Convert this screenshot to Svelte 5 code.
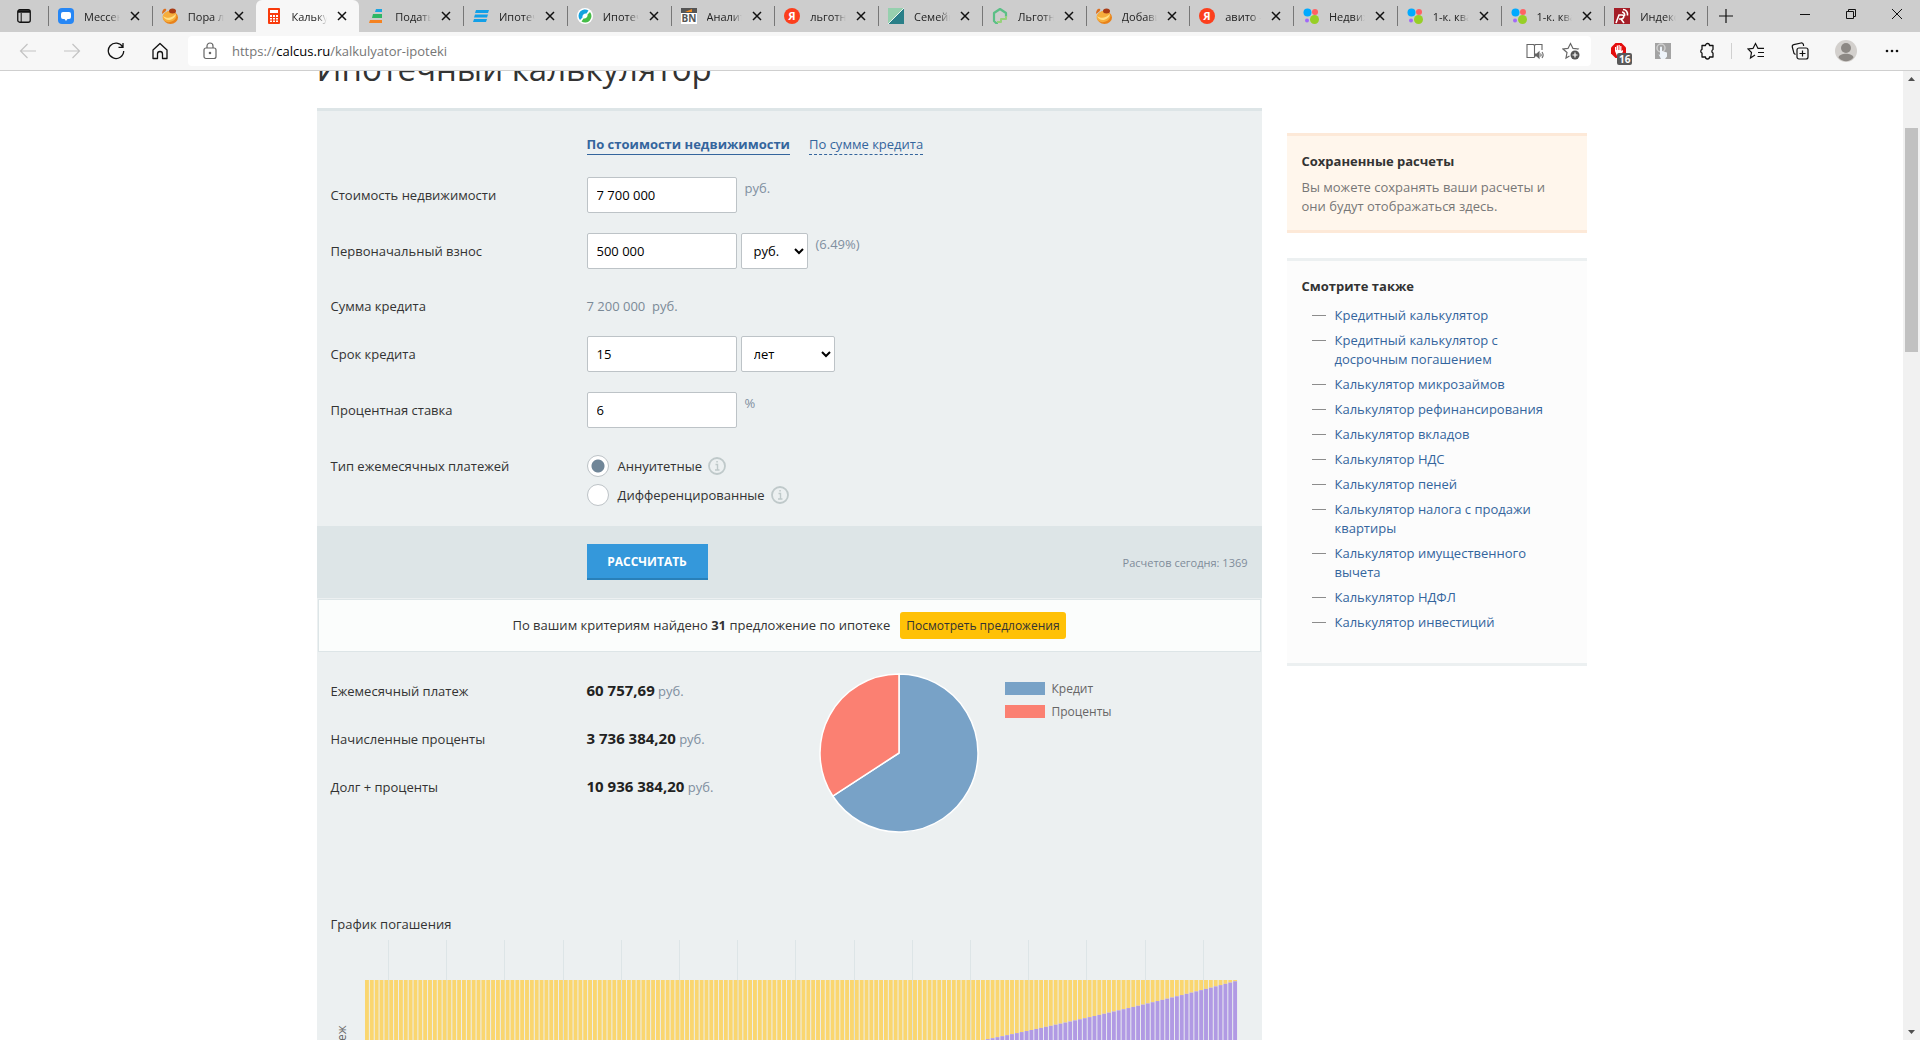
<script lang="ts">
  type Tab = { title: string; icon: string; active?: boolean };

  const tabs: Tab[] = [
    { title: 'Мессенджер', icon: 'chat' },
    { title: 'Пора ли брать', icon: 'ball' },
    { title: 'Калькулятор', icon: 'calc', active: true },
    { title: 'Подать заявку', icon: 'stack' },
    { title: 'Ипотечный', icon: 'stripes' },
    { title: 'Ипотечный', icon: 'ring' },
    { title: 'Аналитика', icon: 'bn' },
    { title: 'льготная ипотека', icon: 'yandex' },
    { title: 'Семейная', icon: 'split' },
    { title: 'Льготная', icon: 'house' },
    { title: 'Добавить', icon: 'ball' },
    { title: 'авито - поиск', icon: 'yandex' },
    { title: 'Недвижимость', icon: 'avito' },
    { title: '1-к. квартира', icon: 'avito' },
    { title: '1-к. квартира', icon: 'avito' },
    { title: 'Индексы', icon: 'index' }
  ];

  const links = [
    'Кредитный калькулятор',
    'Кредитный калькулятор с досрочным погашением',
    'Калькулятор микрозаймов',
    'Калькулятор рефинансирования',
    'Калькулятор вкладов',
    'Калькулятор НДС',
    'Калькулятор пеней',
    'Калькулятор налога с продажи квартиры',
    'Калькулятор имущественного вычета',
    'Калькулятор НДФЛ',
    'Калькулятор инвестиций'
  ];

  const results = [
    { label: 'Ежемесячный платеж', value: '60 757,69' },
    { label: 'Начисленные проценты', value: '3 736 384,20' },
    { label: 'Долг + проценты', value: '10 936 384,20' }
  ];

  let cost = '7 700 000';
  let firstPayment = '500 000';
  let term = '15';
  let rate = '6';
  let paymentType = 'annuity';

  // share of the principal in every monthly payment
  const months = 180;
  const monthRate = 0.06 / 12;
  const step = 4.85;
  const barsLeft = 48;
  const barsTop = 40;
  const barsHeight = 259;
  const bars = Array.from({ length: months }, (_, i) => {
    const share = Math.pow(1 + monthRate, -(months - i));
    return { x: barsLeft + i * step, principal: barsHeight * share };
  });
  const gridLines = Array.from({ length: 15 }, (_, i) => Math.round(71 + i * 12 * step) + 0.5);

  // pie: principal goes clockwise from the top
  const angle = (7200000 / 10936384.2) * 2 * Math.PI;
  const pieX = 80 + 79 * Math.sin(angle);
  const pieY = 80 - 79 * Math.cos(angle);
</script>

<svelte:head>
  <title>Ипотечный калькулятор</title>
</svelte:head>

<div class="browser">
  <header class="tabstrip">
    <button class="tab-menu" aria-label="Меню вкладок">
      <svg width="14" height="14" viewBox="0 0 14 14" fill="none" stroke="#111">
        <rect x=".75" y=".75" width="12.5" height="12.5" rx="2" stroke-width="1.3" />
        <path d="M1 2.5h12" stroke-width="2.5" />
        <path d="M4.200 4v9" />
      </svg>
    </button>

    <nav class="tabs" aria-label="Вкладки">
      {#each tabs as tab}
        <div class="tab" class:active={tab.active}>
          <svg class="favicon" width="16" height="16" viewBox="0 0 16 16">
            {#if tab.icon === 'chat'}
              <rect width="16" height="16" rx="4" fill="#2787f5" />
              <path d="M5 4h6a2 2 0 0 1 2 2v3a2 2 0 0 1-2 2H9.500L8 13l-1.500-2H5a2 2 0 0 1-2-2V6a2 2 0 0 1 2-2z" fill="#fff" />
            {:else if tab.icon === 'ball'}
              <ellipse cx="8.500" cy="9.500" rx="7.500" ry="6.500" fill="#e8821a" />
              <ellipse cx="7.500" cy="8.500" rx="7" ry="5.500" fill="#f6ad3c" transform="rotate(-15 7.500 8.500)" />
              <path d="M1 8c4 3 9 2 13-2-1 6-10 9-13 2z" fill="#ffdf85" />
              <ellipse cx="10.500" cy="3" rx="3.500" ry="2.500" fill="#a93b14" />
              <path d="M0 6c0-4 2-6 4-5 1 1-1 3-4 5z" fill="#dd6f1d" />
            {:else if tab.icon === 'calc'}
              <rect x="2" width="12" height="16" rx="1" fill="#f93b0c" />
              <path d="M4 2h8v3H4zM4 7h2v2H4zM7 7h2v2H7zM10 7h2v2h-2zM4 10h2v1.500H4zM7 10h2v1.500H7zM10 10h2v1.500h-2zM4 12.500h2V14H4zM7 12.500h2V14H7zM10 12.500h2V14h-2z" fill="#fff" />
            {:else if tab.icon === 'stack'}
              <path d="M7 1h6v3H6z" fill="#1ca4e0" />
              <path d="M4 6h9v4H3z" fill="#2fb765" />
              <path d="M1 12h12v3H0z" fill="#f58220" />
            {:else if tab.icon === 'stripes'}
              <path d="M3 2h13l-1 3H2zM2 6.500h13l-1 3H1zM1 11h13l-1 3H0z" fill="#12a0e8" />
            {:else if tab.icon === 'ring'}
              <circle cx="8" cy="8" r="8" fill="#fff" />
              <path d="M3 12A6.400 6.400 0 0 1 11.500 2.600L9.500 5.500C7 5 5 7 5.500 9.500z" fill="#13a3df" />
              <path d="M13 4A6.400 6.400 0 0 1 4.500 13.400L6.500 10.500C9 11 11 9 10.500 6.500z" fill="#46bd48" />
            {:else if tab.icon === 'bn'}
              <rect width="16" height="5" fill="#555" />
              <path d="M4 4l7-3v3z" fill="#f28a1c" />
              <rect y="5" width="16" height="11" fill="#fff" />
              <text x="8" y="14" font-size="10" font-weight="700" text-anchor="middle" fill="#555">BN</text>
            {:else if tab.icon === 'yandex'}
              <circle cx="8" cy="8" r="8" fill="#fc3f1d" />
              <text x="8" y="12" font-size="11" font-weight="700" text-anchor="middle" fill="#fff">Я</text>
            {:else if tab.icon === 'split'}
              <rect width="16" height="16" fill="#2a7f88" />
              <path d="M0 0h16L0 16z" fill="#96d0ae" />
              <path d="M16 0L0 16" stroke="#e8f3ee" />
            {:else if tab.icon === 'house'}
              <path d="M6 15H4l-2-2V5l6-4 6 4v4" fill="none" stroke="#5abf86" stroke-width="2.200" stroke-linejoin="round" />
              <path d="M14 8v3H9v3H5" fill="none" stroke="#96d27a" stroke-width="2" stroke-linejoin="round" />
            {:else if tab.icon === 'avito'}
              <circle cx="4.500" cy="4.500" r="4" fill="#0af" />
              <circle cx="12" cy="4" r="3" fill="#ff6163" />
              <circle cx="4" cy="12.500" r="2" fill="#a169f7" />
              <circle cx="11.500" cy="11.500" r="4.500" fill="#97cf26" />
            {:else}
              <rect width="16" height="16" fill="#a51e28" />
              <path d="M2 15l3-8h3c3 0 2 4-1 4H5M7 11l3 4M8 4c2 0 3 2 2.500 4M9 1.500c3 0 5 2.500 4.500 6" fill="none" stroke="#fff" stroke-width="1.600" />
            {/if}
          </svg>
          <span class="tab-title">{tab.title}</span>
          <button class="tab-close" aria-label="Закрыть вкладку">
            <svg width="10" height="10" viewBox="0 0 10 10"><path d="M1 1l8 8M9 1l-8 8" stroke="#111" stroke-width="1.500" /></svg>
          </button>
        </div>
      {/each}
    </nav>

    <button class="new-tab" aria-label="Новая вкладка">
      <svg width="14" height="14" viewBox="0 0 14 14"><path d="M7 0v14M0 7h14" stroke="#111" stroke-width="1.200" /></svg>
    </button>

    <div class="window-controls">
      <button aria-label="Свернуть">
        <svg width="10" height="10" viewBox="0 0 10 10"><path d="M0 5.500h10" stroke="#111" /></svg>
      </button>
      <button aria-label="Восстановить">
        <svg width="10" height="10" viewBox="0 0 10 10" fill="none" stroke="#111"><path d="M.5 2.500h7v7h-7zM2.500 2V.5h7v7H8" /></svg>
      </button>
      <button aria-label="Закрыть">
        <svg width="10" height="10" viewBox="0 0 10 10"><path d="M0 0l10 10M10 0L0 10" stroke="#111" /></svg>
      </button>
    </div>
  </header>

  <div class="toolbar">
    <button aria-label="Назад" disabled>
      <svg width="18" height="18" viewBox="0 0 18 18" fill="none" stroke="#c3c3c3" stroke-width="1.200"><path d="M17 9H1.500M8.500 2L1.500 9l7 7" /></svg>
    </button>
    <button aria-label="Вперед" disabled>
      <svg width="18" height="18" viewBox="0 0 18 18" fill="none" stroke="#c3c3c3" stroke-width="1.200"><path d="M1 9h15.500M9.500 2l7 7-7 7" /></svg>
    </button>
    <button aria-label="Обновить">
      <svg width="18" height="18" viewBox="0 0 18 18" fill="none" stroke="#111" stroke-width="1.300"><path d="M15.700 5A7.700 7.700 0 1 0 16.700 9M16 1v4.300h-4.500" /></svg>
    </button>
    <button aria-label="Домой">
      <svg width="18" height="18" viewBox="0 0 18 18" fill="none" stroke="#111" stroke-width="1.300" stroke-linejoin="round"><path d="M2 8l7-6.500L16 8v8.500h-4.500V12a2.500 2.500 0 0 0-5 0v4.500H2z" /></svg>
    </button>

    <div class="address">
      <svg width="16" height="18" viewBox="0 0 16 18" fill="none" stroke="#666" stroke-width="1.200">
        <rect x="2" y="6" width="12" height="10.500" rx="2" />
        <path d="M5 6V4a3 3 0 0 1 6 0v2" />
        <circle cx="8" cy="11" r=".7" fill="#666" />
      </svg>
      <a class="url" href="https://calcus.ru/kalkulyator-ipoteki">https://<b>calcus.ru</b>/kalkulyator-ipoteki</a>
      <button aria-label="Иммерсивное чтение">
        <svg width="18" height="18" viewBox="0 0 18 18" fill="none" stroke="#666" stroke-width="1.100">
          <path d="M8.500 15.500H1v-13h6.500l1 1 1-1H16V8M8.500 3.500v12" />
          <path d="M9.500 12h1.500l2-2v6l-2-2H9.500z" fill="#666" />
          <path d="M14.500 11.500c.8 1 .8 2 0 3M16 10c1.500 2 1.500 4 0 6" />
        </svg>
      </button>
      <button aria-label="Добавить в избранное">
        <svg width="18" height="18" viewBox="0 0 18 18" fill="none" stroke="#666" stroke-width="1.200">
          <path d="M7.500 14L4 16l1-5.500L1 7l5-.6L8.500 1.500 11 6.400l5 .6-.5.500" />
          <circle cx="13" cy="13" r="4.500" fill="#555" stroke="none" />
          <path d="M13 10.500v5M10.500 13h5" stroke="#fff" />
        </svg>
      </button>
    </div>

    <button class="ext" aria-label="AdBlock">
      <svg width="18" height="18" viewBox="0 0 18 18">
        <path d="M5.500 1h6L16 5.500v6L11.500 16h-6L1 11.500v-6z" fill="#e40d0d" />
        <path d="M5 9V5h1.200v3h.5V3.500H8V8h.5V3h1.200v5h.5V4h1.200v5l1.600-1v1.500L10.500 14H7z" fill="#fff" />
      </svg>
      <span class="badge">16</span>
    </button>
    <button aria-label="Расширение">
      <svg width="18" height="18" viewBox="0 0 18 18">
        <rect x="1" y="1" width="16" height="16" fill="#a3a3a3" />
        <circle cx="7" cy="6" r="4" fill="none" stroke="#cfcfcf" stroke-width="1.500" />
        <path d="M6 5.500a1 1 0 0 1 2 0V9l5 1.500v4L11 17H7l-2.500-5 1.500 1z" fill="#eef4fa" />
      </svg>
    </button>
    <button aria-label="Расширения">
      <svg width="18" height="18" viewBox="0 0 18 18" fill="none" stroke="#111" stroke-width="1.300" stroke-linejoin="round"><path d="M4 3.500h3.500a2 2 0 0 1 4 0H15V7.500a2 2 0 0 0 0 3.600V15h-3.500a2 2 0 0 1-4 0H4v-3.900a2 2 0 0 1 0-3.700z" /></svg>
    </button>
    <i class="divider"></i>
    <button aria-label="Избранное">
      <svg width="18" height="18" viewBox="0 0 18 18" fill="none" stroke="#111" stroke-width="1.200"><path d="M8 13l-4.500 3 1-5.500L1 7l5-.6L8.500 1.500 11 6.400h6M11 10.500h6M10.500 14.500H17" /></svg>
    </button>
    <button aria-label="Коллекции">
      <svg width="18" height="18" viewBox="0 0 18 18" fill="none" stroke="#111" stroke-width="1.200"><rect x="6" y="6" width="11" height="11" rx="2" /><path d="M11.500 8.500v6M8.500 11.500h6M4.500 12.500L3 11.500 1.300 5a2 2 0 0 1 1.500-2.300L10 1a2 2 0 0 1 2.400 1.500L12.600 4" /></svg>
    </button>
    <button class="profile" aria-label="Профиль">
      <svg width="22" height="22" viewBox="0 0 22 22"><circle cx="11" cy="11" r="11" fill="#d3d0cd" /><circle cx="11" cy="8" r="5" fill="#8c8884" /><path d="M3.500 17.500c1-5 14-5 15 0-4 5-11 5-15 0z" fill="#8c8884" /></svg>
    </button>
    <button aria-label="Настройки">
      <svg width="16" height="4" viewBox="0 0 16 4" fill="#111"><circle cx="3" cy="2" r="1.300" /><circle cx="8" cy="2" r="1.300" /><circle cx="13" cy="2" r="1.300" /></svg>
    </button>
  </div>

  <div class="viewport">
    <div class="page">
      <main>
        <h1>Ипотечный калькулятор</h1>

        <div class="panel">
          <form class="form" on:submit|preventDefault>
            <div class="row">
              <div class="modes">
                <a class="mode current" href="#cost">По стоимости недвижимости</a>
                <a class="mode" href="#sum">По сумме кредита</a>
              </div>
            </div>

            <div class="row">
              <label for="cost">Стоимость недвижимости</label>
              <div class="field">
                <input id="cost" type="text" bind:value={cost} />
                <span class="unit">руб.</span>
              </div>
            </div>

            <div class="row">
              <label for="first">Первоначальный взнос</label>
              <div class="field">
                <input id="first" type="text" bind:value={firstPayment} />
                <select class="currency" aria-label="Единица взноса">
                  <option>руб.</option>
                  <option>%</option>
                </select>
                <span class="unit">(6.49%)</span>
              </div>
            </div>

            <div class="row sum">
              <span>Сумма кредита</span>
              <span class="muted">7 200 000 &nbsp;руб.</span>
            </div>

            <div class="row">
              <label for="term">Срок кредита</label>
              <div class="field">
                <input id="term" type="text" bind:value={term} />
                <select class="period" aria-label="Единица срока">
                  <option>лет</option>
                  <option>месяцев</option>
                </select>
              </div>
            </div>

            <div class="row">
              <label for="rate">Процентная ставка</label>
              <div class="field">
                <input id="rate" type="text" bind:value={rate} />
                <span class="unit">%</span>
              </div>
            </div>

            <div class="row types">
              <span class="types-label">Тип ежемесячных платежей</span>
              <div class="radios">
                <div class="radio">
                  <input id="annuity" type="radio" value="annuity" bind:group={paymentType} />
                  <label for="annuity">Аннуитетные</label>
                  <svg width="18" height="18" viewBox="0 0 18 18" fill="none" stroke="#bfc9ca"><circle cx="9" cy="9" r="8" stroke-width="1.800" /><path d="M7.500 7.500h2V13M7 13h4.500M8.300 4.800h1.500" stroke-width="1.400" /></svg>
                </div>
                <div class="radio">
                  <input id="diff" type="radio" value="diff" bind:group={paymentType} />
                  <label for="diff">Дифференцированные</label>
                  <svg width="18" height="18" viewBox="0 0 18 18" fill="none" stroke="#bfc9ca"><circle cx="9" cy="9" r="8" stroke-width="1.800" /><path d="M7.500 7.500h2V13M7 13h4.500M8.300 4.800h1.500" stroke-width="1.400" /></svg>
                </div>
              </div>
            </div>

            <div class="submit">
              <button class="calculate" type="submit">Рассчитать</button>
              <span class="counter">Расчетов сегодня: 1369</span>
            </div>
          </form>

          <div class="offers">
            <span>По вашим критериям найдено <b>31</b> предложение по ипотеке</span>
            <a class="offers-link" href="#offers">Посмотреть предложения</a>
          </div>

          <section class="results">
            <dl>
              {#each results as result}
                <div class="result">
                  <dt>{result.label}</dt>
                  <dd><b>{result.value}</b> руб.</dd>
                </div>
              {/each}
            </dl>
            <svg class="pie" width="160" height="160" viewBox="0 0 160 160" stroke="#fff" stroke-width="1.500" stroke-linejoin="round">
              <path d="M80 80V1A79 79 0 1 1 {pieX} {pieY}z" fill="#78a2c7" />
              <path d="M80 80L{pieX} {pieY}A79 79 0 0 1 80 1z" fill="#fb8072" />
            </svg>
            <ul class="legend">
              <li><i class="credit"></i>Кредит</li>
              <li><i class="percent"></i>Проценты</li>
            </ul>
          </section>

          <section class="schedule">
            <h2>График погашения</h2>
            <svg viewBox="0 0 945 300">
              {#each gridLines as x}
                <path d="M{x} 0V300" stroke="#dde5e7" />
              {/each}
              {#each bars as bar}
                <rect x={bar.x} y={barsTop} width="3.900" height={barsHeight - bar.principal} fill="#fad66f" />
                <rect x={bar.x} y={barsTop + barsHeight - bar.principal} width="3.900" height={bar.principal} fill="#b19ae4" />
              {/each}
              <text transform="translate(29 149) rotate(-90)" text-anchor="middle" font-size="12" fill="#666">Ежемесячный платеж</text>
            </svg>
          </section>
        </div>
      </main>

      <aside>
        <section class="saved">
          <h3>Сохраненные расчеты</h3>
          <p>Вы можете сохранять ваши расчеты и они будут отображаться здесь.</p>
        </section>

        <section class="related">
          <h3>Смотрите также</h3>
          <ul>
            {#each links as link}
              <li><a href="#calc">{link}</a></li>
            {/each}
          </ul>
        </section>
      </aside>
    </div>

    <div class="scrollbar">
      <svg width="17" height="17" viewBox="0 0 17 17"><path d="M5 10h7L8.500 6z" fill="#505050" /></svg>
      <div class="track"><div class="thumb"></div></div>
      <svg width="17" height="17" viewBox="0 0 17 17"><path d="M5 7h7l-3.500 4z" fill="#505050" /></svg>
    </div>
  </div>
</div>

<style>
  :global(body) {
    margin: 0;
    background: #fff;
  }

  .browser {
    display: flex;
    flex-direction: column;
    height: 100vh;
    overflow: hidden;
    font-family: 'Open Sans', 'Noto Sans', sans-serif;
    font-size: 13px;
    line-height: 19px;
    color: #333;
  }

  .browser * {
    box-sizing: border-box;
  }

  button {
    display: flex;
    align-items: center;
    justify-content: center;
    padding: 0;
    border: 0;
    background: none;
    font: inherit;
  }

  a {
    color: #34659d;
    text-decoration: none;
  }

  input,
  select {
    margin: 0;
    font: inherit;
    color: #000;
  }

  ul,
  dl,
  dd {
    margin: 0;
    padding: 0;
    list-style: none;
  }

  /* browser chrome */
  .tabstrip {
    display: flex;
    flex: none;
    height: 32px;
    background: #cdcdcd;
  }

  .tab-menu {
    width: 48px;
  }

  .tabs {
    display: flex;
    flex: 1;
    min-width: 0;
  }

  .tab {
    position: relative;
    display: flex;
    flex: 1;
    align-items: center;
    gap: 10px;
    min-width: 0;
    padding: 0 12px 0 10px;
    color: #222;
    font-size: 11px;
  }

  .tab::before,
  .tab:last-child::after {
    content: '';
    position: absolute;
    left: 0;
    top: 6px;
    width: 1px;
    height: 20px;
    background: #777;
  }

  .tab:last-child::after {
    left: auto;
    right: 0;
  }

  .tab.active {
    border-radius: 6px 6px 0 0;
    background: #f7f7f7;
  }

  .tab.active::before,
  .tab.active + .tab::before {
    display: none;
  }

  .favicon,
  .tab-close {
    flex: none;
  }

  .tab-title {
    flex: 1;
    overflow: hidden;
    white-space: nowrap;
    mask-image: linear-gradient(90deg, #000 70%, transparent);
  }

  .new-tab {
    width: 36px;
    height: 32px;
  }

  .window-controls {
    display: flex;
    margin-left: 38px;
  }

  .window-controls button {
    width: 46px;
    height: 28px;
  }

  .toolbar {
    display: flex;
    flex: none;
    align-items: center;
    height: 39px;
    padding: 0 6px;
    border-bottom: 1px solid #cfcfcf;
    background: #f7f7f7;
  }

  .toolbar > button {
    flex: none;
    width: 44px;
    height: 32px;
  }

  .toolbar > .profile {
    width: 48px;
  }

  .address {
    display: flex;
    flex: 1;
    align-items: center;
    height: 30px;
    margin: 0 6px;
    padding: 0 2px 0 14px;
    border-radius: 4px;
    background: #fff;
  }

  .address button {
    width: 36px;
  }

  .url {
    flex: 1;
    padding-left: 14px;
    color: #767676;
  }

  .url b {
    font-weight: 400;
    color: #000;
  }

  .ext {
    position: relative;
  }

  .badge {
    position: absolute;
    left: 20px;
    bottom: 2px;
    padding: 0 2px;
    border-radius: 2px;
    background: #5a5a5a;
    color: #fff;
    font-size: 10px;
    font-weight: 700;
    line-height: 12px;
  }

  .divider {
    width: 1px;
    height: 16px;
    margin: 0 2px;
    background: #d0d0d0;
  }

  /* page */
  .viewport {
    display: flex;
    flex: 1;
    min-height: 0;
  }

  .page {
    display: flex;
    flex: 1;
    justify-content: center;
    gap: 25px;
    overflow: hidden;
  }

  main {
    flex: 0 1 945px;
    margin-top: -25px;
  }

  h1 {
    margin: 0 0 16px;
    font-size: 33px;
    font-weight: 400;
    line-height: 46px;
  }

  .panel {
    border-top: 3px solid #dde5e7;
    background: #ecf0f1;
  }

  .form {
    display: flex;
    flex-direction: column;
    gap: 20px;
    padding-top: 23px;
  }

  .row {
    display: grid;
    grid-template-columns: 256px 1fr;
    align-items: center;
    padding: 0 14px;
  }

  .modes {
    display: flex;
    grid-column: 2;
    gap: 19px;
    padding-bottom: 2px;
  }

  .mode {
    border-bottom: 1px dashed #34659d;
    line-height: 20px;
  }

  .mode.current {
    border-bottom-style: solid;
    font-weight: 700;
  }

  .field {
    display: flex;
    gap: 4px;
  }

  .field input {
    width: 150px;
    height: 36px;
    padding: 0 9px;
    border: 1px solid #bdc3c7;
    border-radius: 2px;
  }

  select {
    height: 36px;
    padding: 0 0 0 8px;
    border: 1px solid #bdc3c7;
    border-radius: 2px;
    background: #fff;
  }

  .currency {
    width: 67px;
  }

  .period {
    width: 94px;
  }

  .unit {
    padding: 2px 0 0 4px;
    color: #7f8fa0;
  }

  .sum {
    padding-top: 8px;
  }

  .muted {
    color: #7b8a97;
  }

  .types {
    align-items: start;
    padding-top: 7px;
  }

  .types-label {
    line-height: 22px;
  }

  .radios {
    display: grid;
    gap: 7px;
  }

  .radio {
    display: flex;
    align-items: center;
    height: 22px;
  }

  .radio input {
    appearance: none;
    width: 22px;
    height: 22px;
    margin: 0 9px 0 0;
    border: 1px solid #bdc3c7;
    border-radius: 50%;
    background: #fff;
  }

  .radio input:checked {
    background: radial-gradient(circle, #708698 6px, #fff 7px);
  }

  .radio svg {
    margin-left: 6px;
  }

  .submit {
    display: flex;
    align-items: center;
    justify-content: space-between;
    height: 72px;
    padding: 0 14px 0 270px;
    background: #dde5e7;
  }

  .calculate {
    width: 121px;
    height: 36px;
    border-bottom: 2px solid #2980b9;
    background: #3498db;
    color: #fff;
    font-size: 12px;
    font-weight: 700;
    text-transform: uppercase;
  }

  .counter {
    color: #7f8c9a;
    font-size: 11px;
  }

  .offers {
    display: flex;
    align-items: center;
    justify-content: center;
    gap: 10px;
    height: 53px;
    margin: 1px 1px 0;
    border: 1px solid #dde5e7;
    background: #fbfdfc;
  }

  .offers-link {
    padding: 4px 6px;
    border-radius: 3px;
    background: #ffc107;
    color: #333;
    font-size: 12px;
  }

  .results {
    display: flex;
    align-items: flex-start;
    padding: 15px 14px 0;
  }

  dl {
    width: 488px;
  }

  .result {
    display: grid;
    grid-template-columns: 256px 1fr;
    align-items: center;
    height: 48px;
  }

  dd {
    color: #7f8fa0;
  }

  dd b {
    color: #222;
    font-size: 15px;
  }

  .pie {
    margin-top: 6px;
  }

  .legend {
    padding: 10px 0 0 26px;
    color: #666;
    font-size: 12px;
  }

  .legend li {
    display: flex;
    align-items: center;
    gap: 7px;
    height: 23px;
  }

  .legend i {
    width: 40px;
    height: 13px;
  }

  .credit {
    background: #78a2c7;
  }

  .percent {
    background: #fb8072;
  }

  .schedule {
    padding-top: 82px;
  }

  h2 {
    margin: 0 0 6px 14px;
    font-size: 13px;
    font-weight: 400;
  }

  .schedule svg {
    display: block;
    width: 100%;
  }

  aside {
    width: 300px;
    padding-top: 62px;
  }

  h3 {
    margin: 0 0 7px;
    color: #333;
    font-size: 13px;
    line-height: 19px;
  }

  .saved {
    margin-bottom: 25px;
    padding: 16px 15px 14px;
    border: 3px solid #fde9d8;
    border-width: 3px 0;
    background: #fff6ec;
    color: #777;
  }

  .saved p {
    margin: 0;
  }

  .related {
    padding: 16px 15px 25px;
    border: 3px solid #ecf0f1;
    border-width: 3px 0;
    background: #fcfcfc;
  }

  .related h3 {
    margin-bottom: 10px;
  }

  .related li {
    display: flex;
    gap: 9px;
    margin-bottom: 6px;
    padding-left: 10px;
  }

  .related li::before {
    content: '';
    flex: none;
    width: 14px;
    height: 1px;
    margin-top: 9px;
    background: #8c8c8c;
  }

  .scrollbar {
    display: flex;
    flex-direction: column;
    width: 17px;
    background: #f1f1f1;
  }

  .track {
    flex: 1;
    padding: 40px 2px 0;
  }

  .thumb {
    height: 25%;
    background: #c1c1c1;
  }
</style>
